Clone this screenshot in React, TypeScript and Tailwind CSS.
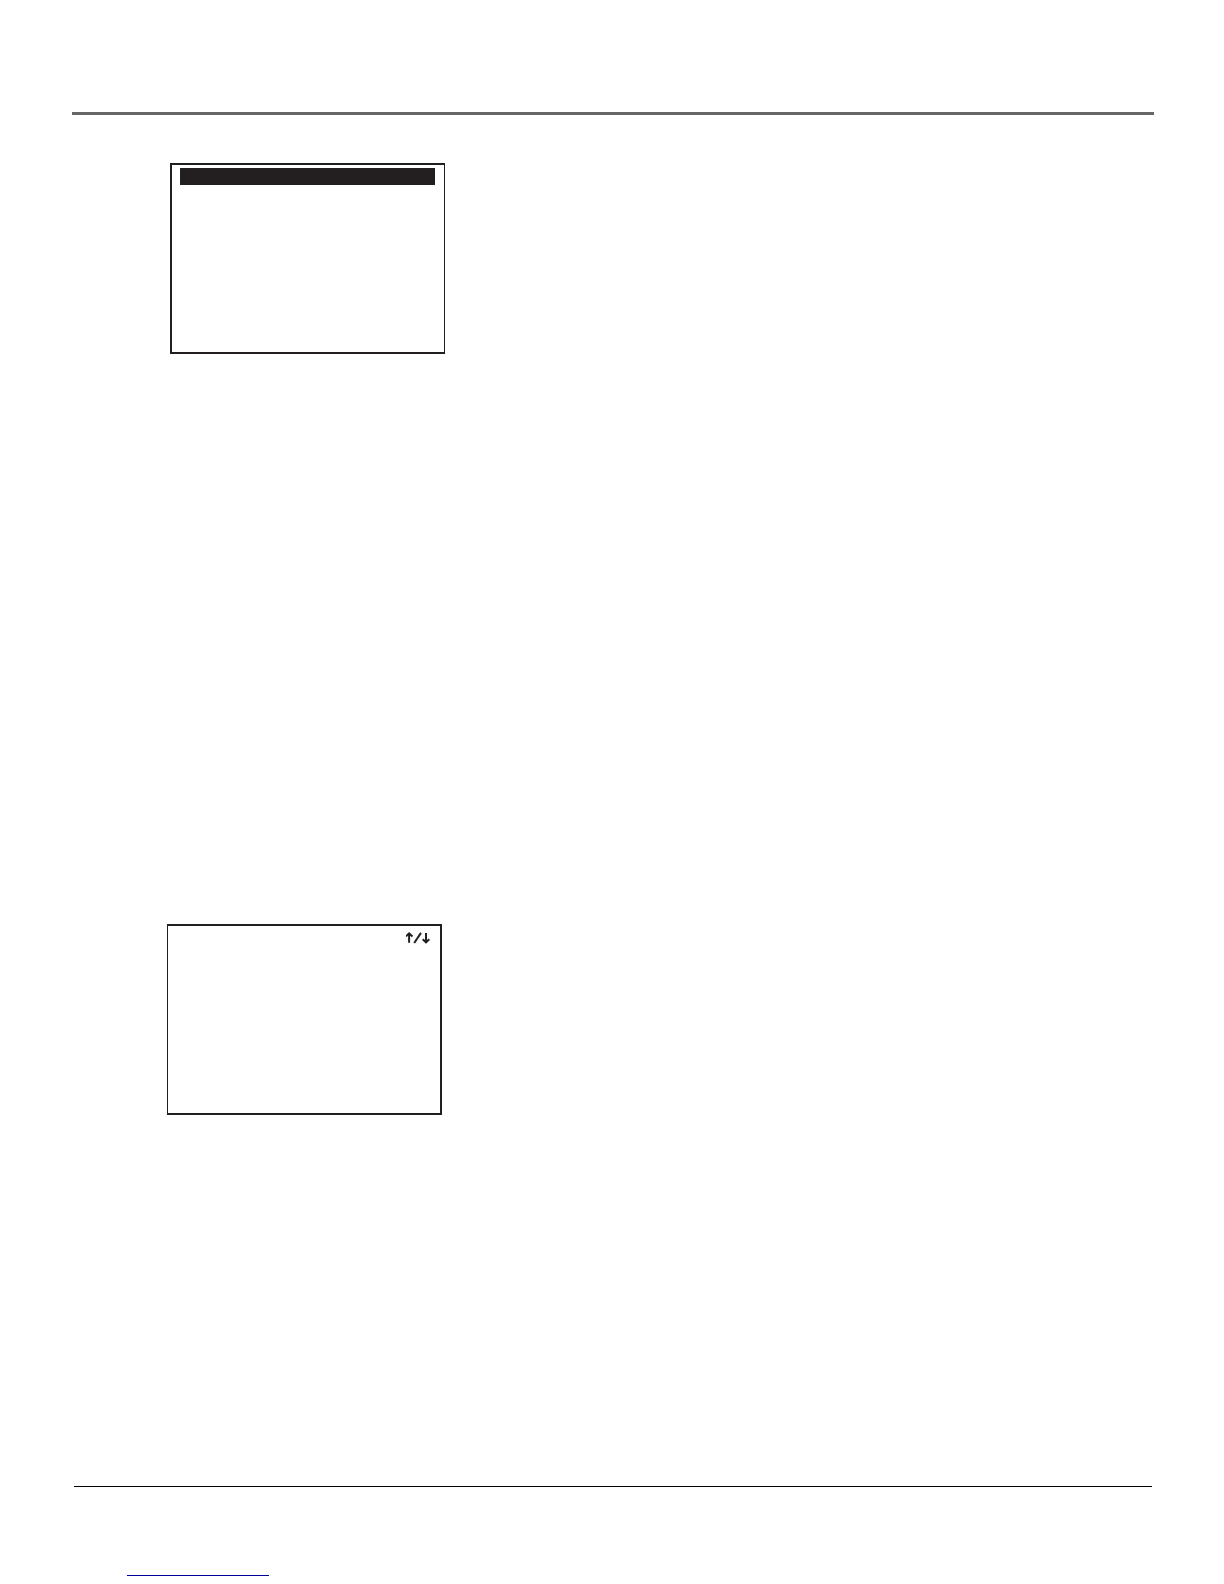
function ScrollArrows() {
  return (
    <svg className="w-6 h-3" viewBox="0 0 24 12" fill="none" stroke="#231f20" strokeWidth={2}>
      {/* up */}
      <path d="M3.1 10.8V2M0 4.4L3.1 1.4l3.4 3" />
      {/* slash */}
      <path d="M8.2 11L15 0.9" />
      {/* down */}
      <path d="M20 1v8.8M16.7 7.3l3.3 3 3.3-3" />
    </svg>
  );
}

export default function App() {
  return (
    <div className="flex min-h-screen flex-col bg-white">
      {/* Header rule */}
      <header className="ml-[72px] mr-[70px] pt-28">
        <div className="h-[3px] bg-[#666666]" />
      </header>

      <main className="flex flex-1 flex-col items-start pt-12">
        {/* Menu screen with the first row selected */}
        <section className="ml-[170px] h-[191px] w-[275px] border-2 border-r border-[#231f20] pt-[3px] pl-2 pr-[9px]">
          <div className="h-[17px] bg-[#231f20]" />
        </section>

        {/* Screen with scroll indicator */}
        <section className="mt-[570px] ml-[167px] flex h-[191px] w-[275px] items-start justify-end border-2 border-l border-[#231f20] pt-1.5 pr-2.5">
          <ScrollArrows />
        </section>
      </main>

      {/* Footer */}
      <footer className="pb-2">
        <div className="ml-[74px] mr-[72px] h-px bg-black" />
        <div className="mt-[88px] ml-[127px] h-px w-[142px] bg-[#000099]" />
      </footer>
    </div>
  );
}
